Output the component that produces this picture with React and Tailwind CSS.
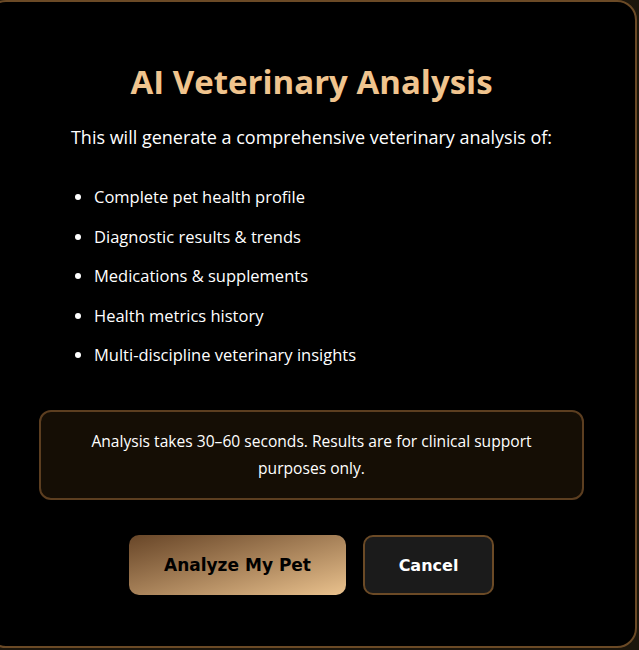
export default function App() {
  const items = [
    "Complete pet health profile",
    "Diagnostic results & trends",
    "Medications & supplements",
    "Health metrics history",
    "Multi-discipline veterinary insights",
  ];
  return (
    <div className="w-[639px] h-[650px] overflow-hidden bg-[#1c160c]" style={{ fontFamily: '"Open Sans", sans-serif' }}>
      <div className="-ml-[14px] w-[651px] h-[648px] border-2 border-[#6b4a26] rounded-[20px] bg-black px-[51px] pt-[62px] text-white">
        <h1 className="text-center text-[33px] leading-[36px] font-bold text-[#f0c48e]">AI Veterinary Analysis</h1>
        <p className="mt-[23px] text-center text-[18px] leading-[28px]">This will generate a comprehensive veterinary analysis of:</p>
        <ul className="mt-[26px] list-disc pl-[55px] text-[16.5px]">
          {items.map((t) => (
            <li key={t} className="leading-[25.5px] py-[7px]">{t}</li>
          ))}
        </ul>
        <div className="mt-[35px] h-[90px] border-2 border-[#5c3e20] rounded-[12px] bg-[#150e05] flex items-center justify-center text-center text-[15.6px] leading-[27px] px-[40px]">
          Analysis takes 30–60 seconds. Results are for clinical support purposes only.
        </div>
        <div className="mt-[35px] flex justify-center items-center gap-[17px]" style={{ fontFamily: '"DejaVu Sans", sans-serif' }}>
          <button className="w-[217px] h-[60px] pt-[3px] rounded-[10px] bg-gradient-to-br from-[#684628] to-[#eac28e] text-black font-bold text-[17px]">Analyze My Pet</button>
          <button className="w-[131px] h-[60px] pt-[3px] rounded-[10px] bg-[#1b1b1b] border-2 border-[#6b4a26] text-white font-bold text-[16px]">Cancel</button>
        </div>
      </div>
    </div>
  );
}
